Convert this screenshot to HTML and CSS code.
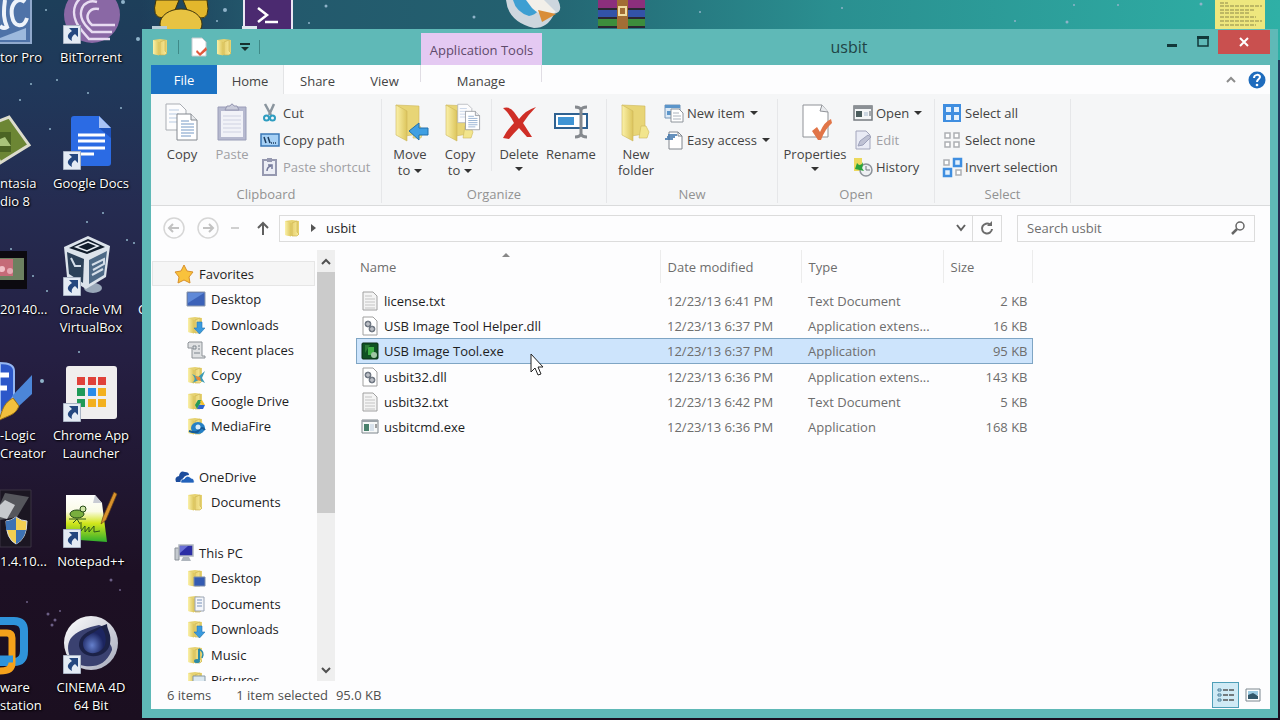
FILE: index.html
```html
<!DOCTYPE html>
<html lang="en">

<head>
    <meta charset="utf-8">
    <meta name="viewport" content="width=device-width, initial-scale=1.0">
    <title>usbit</title>

    <link rel="stylesheet" href="styles.css">

</head>

<body>
    <!-- shared icons -->
    <svg class="defs" aria-hidden="true">
        <defs>
            <linearGradient id="gold" x1="0" x2="1">
                <stop offset="0" stop-color="#fbf1a9"/>
                <stop offset="1" stop-color="#dcc55c"/>
            </linearGradient>
            <linearGradient id="gold2" x1="0" x2="1">
                <stop offset="0" stop-color="#e8d273"/>
                <stop offset="1" stop-color="#f7eb9b"/>
            </linearGradient>
            <linearGradient id="notegreen" x1="0" x2="0" y1="0" y2="1">
                <stop offset="0" stop-color="#fff"/>
                <stop offset=".35" stop-color="#fafbe6"/>
                <stop offset=".6" stop-color="#d3e61c"/>
                <stop offset="1" stop-color="#2fae2c"/>
            </linearGradient>
            <radialGradient id="lens" cx=".4" cy=".7">
                <stop offset="0" stop-color="#6580cc"/>
                <stop offset="1" stop-color="#1c2560"/>
            </radialGradient>
            <linearGradient id="silver" x1="0" x2="1" y1="0" y2="1">
                <stop offset="0" stop-color="#fff"/>
                <stop offset="1" stop-color="#a5a9bb"/>
            </linearGradient>
        </defs>
        <symbol id="folder" viewBox="0 0 18 18">
            <path d="M2 2l7-1 7 1v14l-7 1-7-1z" fill="#e6d271"/>
            <path d="M2 2l6 2v13.500l-6-1.500z" fill="url(#gold)"/>
            <path d="M9 4l5-2v11l2 2-2 2H9z" fill="url(#gold2)" stroke="#c9b04c" stroke-width=".6"/>
        </symbol>
        <symbol id="bigfolder" viewBox="0 0 36 40">
            <path d="M4 3l23 1v28l-14 2z" fill="#e8d576" stroke="#cdb75a" stroke-width=".6"/>
            <path d="M23 24h5l3 6-2 6h-8z" fill="#f2e58d" stroke="#cdb75a" stroke-width=".6"/>
            <path d="M4 3l11 6v30L4 33z" fill="url(#gold)" stroke="#cdb75a" stroke-width=".6"/>
        </symbol>
        <symbol id="shortcut" viewBox="0 0 18 19">
            <path d="M.5.500h17v18H.5z" fill="#e4ebf4" stroke="#aab4c4"/>
            <path d="M6 3h9v9l-3-3c-3 2-4 4-3 7-6-3-5-7 0-10z" fill="#24477f"/>
        </symbol>
        <symbol id="pages" viewBox="0 0 34 38">
            <path d="M1 1h14l6 6v20H1z" fill="#fcfcfd" stroke="#a9adb3"/>
            <path d="M4 7h10M4 11h10M4 15h8M4 19h8" stroke="#b9cbe2"/>
            <path d="M12 11h14l6 6v20H12z" fill="#fff" stroke="#83888f"/>
            <path d="M26 11v6h6" fill="#e7e9ec" stroke="#83888f"/>
            <path d="M16 18h8M16 21h13M16 24h13M16 27h13M16 30h13M16 33h10" stroke="#7599c5"/>
        </symbol>
        <symbol id="txt" viewBox="0 0 18 20">
            <path d="M2 1h10l4 4v14H2z" fill="#f4f4f4" stroke="#a0a0a0"/>
            <path d="M4 5h7M4 8h10M4 11h10M4 14h10M4 17h10" stroke="#c4c4c4"/>
        </symbol>
        <symbol id="dll" viewBox="0 0 18 20">
            <path d="M2 1h10l4 4v14H2z" fill="#fff" stroke="#a0a0a0"/>
            <circle cx="7" cy="8" r="2.500" fill="none" stroke="#68707c" stroke-width="1.500"/>
            <circle cx="11" cy="13" r="2.500" fill="none" stroke="#68707c" stroke-width="1.500"/>
            <path d="M7 4.500v7M3.500 8h7M11 9.500v7M7.500 13h7" stroke="#8a919b" stroke-width=".7"/>
        </symbol>
        <symbol id="arrowdown" viewBox="0 0 18 18">
            <path d="M10 5h5v6h3l-5.500 6L7 11h3z" fill="#3a9ade" stroke="#2577b5" stroke-width=".6"/>
        </symbol>
    </svg>

    <svg class="sky" aria-hidden="true">
        <g fill="#8fb3c9">
            <circle cx="123" cy="2" r="2"/>
            <circle cx="138" cy="39" r="2"/>
            <circle cx="46" cy="10" r="1"/>
            <circle cx="31" cy="84" r="1"/>
            <circle cx="57" cy="80" r="1"/>
            <circle cx="20" cy="100" r="1"/>
            <circle cx="121" cy="108" r="1"/>
            <circle cx="88" cy="93" r="1"/>
            <circle cx="50" cy="129" r="1"/>
            <circle cx="103" cy="213" r="1"/>
            <circle cx="87" cy="222" r="1"/>
            <circle cx="127" cy="240" r="1"/>
            <circle cx="134" cy="243" r="1"/>
            <circle cx="47" cy="291" r="1"/>
            <circle cx="11" cy="249" r="1"/>
            <circle cx="33" cy="276" r="1"/>
            <circle cx="42" cy="381" r="2"/>
            <circle cx="79" cy="352" r="1"/>
            <circle cx="225" cy="10" r="2"/>
            <circle cx="217" cy="21" r="1"/>
            <circle cx="326" cy="6" r="1.500"/>
            <circle cx="309" cy="23" r="1"/>
            <circle cx="474" cy="17" r="1.500"/>
            <circle cx="700" cy="12" r="1"/>
            <circle cx="842" cy="8" r="1"/>
            <circle cx="1015" cy="21" r="1"/>
            <circle cx="1074" cy="5" r="1"/>
            <circle cx="1067" cy="22" r="1.500"/>
            <circle cx="1118" cy="5" r="1"/>
            <circle cx="1201" cy="4" r="1.500"/>
        </g>
        <g fill="#6c5f86">
            <circle cx="48" cy="614" r="1.500"/>
            <circle cx="55" cy="620" r="1.500"/>
            <circle cx="60" cy="611" r="1"/>
            <circle cx="52" cy="625" r="1.500"/>
            <circle cx="111" cy="580" r="1.500"/>
            <circle cx="120" cy="590" r="1"/>
            <circle cx="27" cy="602" r="1"/>
        </g>
    </svg>

    <main class="desktop">
        <section class="icons icons-edge">
            <div class="shortcut">
                <svg viewBox="0 0 46 60">
                    <path d="M-10 2h41v53h-41z" fill="#4f73a8" stroke="#90a9cc" stroke-width="2"/>
                    <path d="M0 50l26-10v12H0z" fill="#9db9dd"/>
                    <path d="M25 14C18 8 10 16 12 28s12 12 15 2M5 12c-2 14-1 20 2 27-3 2-5 1-7-1" fill="none" stroke="#eef3fa" stroke-width="4"/>
                </svg>
                <span>tor Pro</span>
            </div>
            <div class="shortcut">
                <svg viewBox="0 0 46 60">
                    <path d="M-14 12L9 3l20 28L0 49z" fill="#6c8634" stroke="#dcdccc" stroke-width="3"/>
                    <path d="M0 18h11v20H0z" fill="#4b6423"/>
                    <path d="M0 25l5-2 6 9H0z" fill="#a9c47a"/>
                </svg>
                <span>ntasia<br>dio 8</span>
            </div>
            <div class="shortcut">
                <svg viewBox="0 0 46 60">
                    <path d="M0 11h27v38H0z" fill="#0c0a10"/>
                    <path d="M0 18h24v22H0z" fill="#6c8060"/>
                    <path d="M0 19h13v17H0z" fill="#c56b78"/>
                    <circle cx="2" cy="29" r="3" fill="#f1c1c8"/>
                    <circle cx="10" cy="31" r="3" fill="#e7aab4"/>
                </svg>
                <span>20140...</span>
            </div>
            <div class="shortcut">
                <svg viewBox="0 0 46 60">
                    <path d="M0-3q14 0 14 8v25L0 49z" fill="#2c57c9" stroke="#94b6f2" stroke-width="2"/>
                    <path d="M0 9h9M0 22h7" stroke="#fff" stroke-width="5"/>
                    <path d="M32 9v19L19 40l-7-10z" fill="#4c86d8"/>
                    <path d="M13 32l6 8C15 50 8 49-2 55c4-5 3-17 15-23z" fill="#f2c03d" stroke="#a07616"/>
                </svg>
                <span>-Logic<br>Creator</span>
            </div>
            <div class="shortcut">
                <svg viewBox="0 0 46 60">
                    <path d="M0-2h31v57H0z" fill="#1b1622" stroke="#3a3243"/>
                    <path d="M5 1l24 4-12 20L0 28V12z" fill="#55565c"/>
                    <path d="M0 13l5-5 10 5-8 14-7-2z" fill="#c7c9cd"/>
                    <path d="M16 25q-5 4-10 4 0 18 10 23 11-5 11-23-6 0-11-4z" fill="#f2cf52" stroke="#d6dbe4"/>
                    <path d="M16 25q-5 4-10 4v9h10zM16 38h10q-2 10-10 14z" fill="#3d72b4"/>
                </svg>
                <span>1.4.10...</span>
            </div>
            <div class="shortcut">
                <svg viewBox="0 0 46 60">
                    <path d="M0 3h14q10 0 10 10v20q0 11-10 11H0" fill="none" stroke="#2f93da" stroke-width="8"/>
                    <path d="M0 15h7q5 0 5 5v25q0 8-12 8" fill="none" stroke="#f5a11b" stroke-width="7"/>
                    <path d="M13 41H0" stroke="#2f93da" stroke-width="7"/>
                </svg>
                <span>ware<br>station</span>
            </div>
        </section>

        <section class="icons icons-main">
            <div class="shortcut">
                <svg viewBox="0 0 60 60">
                    <circle cx="31" cy="27" r="28" fill="#8a68a5"/>
                    <path d="M34 7C16 4 4 24 22 44l6 7h21M36 14C22 10 13 26 27 40l4 4h20M38 21c-10-2-16 8-7 16h23" fill="none" stroke="#e8dcf2" stroke-width="2.500"/>
                    <use href="#shortcut" x="2" y="37" width="18" height="19"/>
                </svg>
                <span>BitTorrent</span>
            </div>
            <div class="shortcut">
                <svg viewBox="0 0 60 60">
                    <path d="M13 2h25l12 12v35q0 3-3 3H13q-3 0-3-3V5q0-3 3-3z" fill="#2b6be4"/>
                    <path d="M38 2l12 12H38z" fill="#a9c3f5"/>
                    <path d="M38 14h12v10z" fill="#1e52bb"/>
                    <path d="M17 21h27M17 27h27M17 34h27M17 40h16" stroke="#fff" stroke-width="3"/>
                    <use href="#shortcut" x="2" y="37" width="18" height="19"/>
                </svg>
                <span>Google Docs</span>
            </div>
            <div class="shortcut">
                <svg viewBox="0 0 60 60">
                    <ellipse cx="32" cy="48" rx="9" ry="5" fill="#99a7b8"/>
                    <path d="M27-4l22 10-4 31-20 12L6 37 3 7z" fill="#dce3eb"/>
                    <path d="M27-1l17 8-18 7-18-6z" fill="#101c2b"/>
                    <path d="M27 2l10 4-11 5-11-4z" fill="none" stroke="#e7edf4" stroke-width="1.500"/>
                    <path d="M6 12l17 7-1 24-14-9z" fill="#2c4159"/>
                    <path d="M46 11L28 20v24l15-9z" fill="#4d6986"/>
                    <path d="M31 25l12-6v5l-11 6M31 35l11-6M10 18l4 8 6 0" fill="none" stroke="#d3dde8" stroke-width="2"/>
                    <use href="#shortcut" x="2" y="37" width="18" height="19"/>
                </svg>
                <span>Oracle VM<br>VirtualBox</span>
            </div>
            <div class="shortcut">
                <svg viewBox="0 0 60 60">
                    <rect x="5" y="0" width="51" height="53" rx="3" fill="#f0eeee"/>
                    <path d="M16 11h8v8h-8zM27 11h8v8h-8zM37 11h8v8h-8z" fill="#e0413a"/>
                    <path d="M16 22h8v8h-8zM16 33h8v8h-8z" fill="#1f9a58"/>
                    <path d="M27 22h8v8h-8z" fill="#2a8be8"/>
                    <path d="M37 22h8v8h-8zM27 33h8v8h-8zM37 33h8v8h-8z" fill="#f3b01f"/>
                    <use href="#shortcut" x="2" y="37" width="18" height="19"/>
                </svg>
                <span>Chrome App<br>Launcher</span>
            </div>
            <div class="shortcut">
                <svg viewBox="0 0 60 60">
                    <path d="M5 3h29l7 8 5 39-41-3z" fill="url(#notegreen)"/>
                    <path d="M34 3l-2 8h9z" fill="#c9ccd4"/>
                    <path d="M53 0l3 2-11 26-5 4 2-7z" fill="#d8922c" stroke="#6b4417" stroke-width=".7"/>
                    <ellipse cx="16" cy="22" rx="7" ry="4" fill="#79ae3e" stroke="#264b17"/>
                    <circle cx="22" cy="17" r="3" fill="#cfe5a5" stroke="#264b17"/>
                    <path d="M8 27h17M12 31l4-4 3 5M20 30v9l4-5v6l4-5v5l5-6v6l6-1" fill="none" stroke="#2c551a"/>
                    <use href="#shortcut" x="2" y="37" width="18" height="19"/>
                </svg>
                <span>Notepad++</span>
            </div>
            <div class="shortcut">
                <svg viewBox="0 0 60 60">
                    <circle cx="30" cy="25" r="27" fill="url(#silver)"/>
                    <path d="M8 36C4 20 14 12 38 7l8 3c-4 12 6 16 5 22-6 14-14 17-27 16C14 46 10 43 8 36z" fill="#3a4170"/>
                    <path d="M46 6c0 6 5 10 3 20-4 16-28 16-31 2C18 14 32 12 46 6z" fill="#1c2247"/>
                    <path d="M40 9c5 6 6 14 3 20-7 10-21 7-21-3C22 17 32 17 40 9z" fill="url(#lens)"/>
                    <use href="#shortcut" x="2" y="37" width="18" height="19"/>
                </svg>
                <span>CINEMA 4D<br>64 Bit</span>
            </div>
        </section>

        <svg class="peek peek-mascot" viewBox="0 0 60 30" aria-hidden="true">
            <path d="M4 0h23l-4 10-12 8q-12 0-7-18zM31 0h24q4 20-8 18L35 10z" fill="#e3b72c" stroke="#3e340c"/>
            <ellipse cx="29" cy="24" rx="21" ry="15" fill="#e8c342" stroke="#3e340c"/>
            <path d="M0 26h15v4H0z" fill="#b9cdd6"/>
        </svg>
        <svg class="peek peek-shell" viewBox="0 0 52 30" aria-hidden="true">
            <path d="M2-3h48v33H2z" fill="#4b2a70" stroke="#ece6f3" stroke-width="2"/>
            <path d="M16 8l9 7-9 7" fill="none" stroke="#fff" stroke-width="2.500"/>
            <path d="M23 22h13" stroke="#fff" stroke-width="2.500"/>
            <path d="M0 26h15v4H0z" fill="#dfe6ee"/>
        </svg>
        <svg class="peek peek-disc" viewBox="0 0 60 30" aria-hidden="true">
            <path d="M2 0h52q6 12-4 14-6 14-20 14Q4 22 2 0z" fill="#cdd6de"/>
            <path d="M9 0h28q0 14-12 16Q12 12 9 0z" fill="#3d9fd2"/>
            <path d="M22 0h18l12 12q-12 8-24-4z" fill="#f2efe9"/>
            <path d="M34 10l18 4-14 8z" fill="#d98d38"/>
        </svg>
        <svg class="peek peek-rar" viewBox="0 0 50 30" aria-hidden="true">
            <path d="M1 0h47v10H1z" fill="#8c2f7c"/>
            <path d="M1 10h47v9H1z" fill="#3353a8"/>
            <path d="M1 19h47v9H1z" fill="#3d8d3c"/>
            <path d="M1 9h47M1 18h47M1 27h47" stroke="#2b2731" stroke-width="2"/>
            <path d="M20 0h11v29H20z" fill="#a26d35"/>
            <path d="M22 7h7v8h-7z" fill="none" stroke="#f0dda1" stroke-width="2"/>
        </svg>
        <svg class="peek peek-note" viewBox="0 0 50 30" aria-hidden="true">
            <path d="M0 0h50v29H0z" fill="#eee77e"/>
            <path d="M5 3h8M5 6h42M5 10h34M5 13h30M5 17h36M5 21h42M5 25h36" stroke="#8d884a" stroke-dasharray="4 1"/>
        </svg>
        <span class="hidden-label">C</span>

        <article class="window">
            <header class="titlebar">
                <div class="quick">
                    <svg width="18" height="18"><use href="#folder"/></svg>
                    <i></i>
                    <button aria-label="Properties"><svg width="18" height="20" viewBox="0 0 18 20"><path d="M2 1h10l4 4v14H2z" fill="#fff" stroke="#c8ccd0"/><path d="M7 13l3 3 6-6 1 3-7 6-4-4z" fill="#e2593c"/></svg></button>
                    <button aria-label="New folder"><svg width="18" height="18"><use href="#folder"/></svg></button>
                    <button aria-label="Customize toolbar"><svg width="10" height="9" viewBox="0 0 10 9"><path d="M0 0h10v2H0zM1 4h8L5 8z" fill="#16302e"/></svg></button>
                    <i></i>
                </div>
                <div class="context">Application Tools</div>
                <h1>usbit</h1>
                <div class="controls">
                    <button aria-label="Minimize"><svg width="12" height="12" viewBox="0 0 12 12"><path d="M1 8h10v3H1z" fill="#12383a"/></svg></button>
                    <button aria-label="Maximize"><svg width="12" height="12" viewBox="0 0 12 12"><path d="M1 1h10v9H1z" fill="none" stroke="#12383a" stroke-width="1.500"/><path d="M0 0h12v3H0z" fill="#12383a"/></svg></button>
                    <button class="close" aria-label="Close"><svg width="10" height="10" viewBox="0 0 10 10"><path d="M1 1l8 8M9 1L1 9" stroke="#fff" stroke-width="2"/></svg></button>
                </div>
            </header>

            <nav class="tabs">
                <button class="file">File</button>
                <button class="active">Home</button>
                <button>Share</button>
                <button>View</button>
                <button class="manage">Manage</button>
                <div class="help">
                    <button aria-label="Minimize ribbon"><svg width="10" height="6" viewBox="0 0 10 6"><path d="M1 5l4-4 4 4" fill="none" stroke="#8c8c8c" stroke-width="2"/></svg></button>
                    <button aria-label="Help"><svg width="18" height="18" viewBox="0 0 18 18"><circle cx="9" cy="9" r="8.500" fill="#1f6cbd"/><path d="M6 7c0-4 6-4 6-1 0 2-3 2-3 5" fill="none" stroke="#fff" stroke-width="2"/><circle cx="9" cy="14" r="1.300" fill="#fff"/></svg></button>
                </div>
            </nav>

            <section class="ribbon">
                <div class="group clipboard">
                    <div class="tools">
                        <button class="big"><svg viewBox="0 0 36 40"><use href="#pages" x="1" y="1" width="34" height="38"/></svg>Copy</button>
                        <button class="big off"><svg viewBox="0 0 36 40"><path d="M4 5h28v33H4z" fill="#b6b9cf" stroke="#9a9db8"/><path d="M7 9h22v26H7z" fill="#f1f2f8"/><path d="M9 14h18M9 18h18M9 22h18M9 26h18M9 30h18" stroke="#cfd2e2"/><path d="M11 8l2-4h3q2-4 4 0h3l2 4z" fill="#c9cbda" stroke="#9496b0"/></svg>Paste</button>
                        <div class="stack">
                            <button><svg viewBox="0 0 20 20"><path d="M5 1l6 11M14 1L9 12" stroke="#8a959e" stroke-width="2.500"/><circle cx="6.500" cy="15" r="2.500" fill="none" stroke="#2e9dc0" stroke-width="2"/><circle cx="12.500" cy="15" r="2.500" fill="none" stroke="#2e9dc0" stroke-width="2"/></svg>Cut</button>
                            <button><svg viewBox="0 0 20 20"><path d="M1 4h18v12H1z" fill="#a5d0f5" stroke="#3b78b6" stroke-width="1.500"/><path d="M4 7l2 6M8 7l2 6M11 13h1M13 13h1M15 13h1" stroke="#1b3b5e" stroke-width="1.500"/></svg>Copy path</button>
                            <button class="off"><svg viewBox="0 0 20 20"><path d="M3 3h13v15H3z" fill="#eceef5" stroke="#9699b0" stroke-width="2"/><path d="M7 1h5v4H7z" fill="#9699b0"/><path d="M7 14q0-4 4-5M8 8h4v4" fill="none" stroke="#74799a" stroke-width="1.500"/></svg>Paste shortcut</button>
                        </div>
                    </div>
                    <h2>Clipboard</h2>
                </div>

                <div class="group organize">
                    <div class="tools">
                        <button class="big"><svg viewBox="0 0 36 40"><use href="#bigfolder" width="36" height="40"/><path d="M17 29l10-8v5h9v7h-9v5z" fill="#3f9fe2" stroke="#2371ad"/></svg>Move<br>to<b></b></button>
                        <button class="big"><svg viewBox="0 0 36 40"><use href="#bigfolder" width="36" height="40"/><use href="#pages" x="15" y="1" width="24" height="28"/></svg>Copy<br>to<b></b></button>
                        <i></i>
                        <button class="big"><svg viewBox="0 0 36 40"><path d="M2 6q7-2 11 4l5 7Q25 8 35 5q-8 8-13 16l9 14-5 0-8-9Q12 32 8 37l-6-1q4-8 11-15Q8 11 2 6z" fill="#cf2f27"/></svg>Delete<b class="below"></b></button>
                        <button class="big"><svg viewBox="0 0 36 40"><path d="M2 12h32v14H2z" fill="#fff" stroke="#2e6191" stroke-width="2"/><path d="M5 15h16v8H5z" fill="#3f94d4"/><path d="M22 5q5 0 6 3 1-3 6-3M22 35q5 0 6-3 1 3 6 3M28 7v26" fill="none" stroke="#85898e" stroke-width="3"/></svg>Rename</button>
                    </div>
                    <h2>Organize</h2>
                </div>

                <div class="group new">
                    <div class="tools">
                        <button class="big"><svg viewBox="0 0 36 40"><use href="#bigfolder" width="36" height="40"/></svg>New<br>folder</button>
                        <div class="stack">
                            <button><svg viewBox="0 0 20 20"><path d="M1 2h15v13H1z" fill="#dbe9f6" stroke="#7696b7"/><path d="M1 2h15v3H1z" fill="#5b95ca"/><path d="M3 8h4v4H3z" fill="#5b95ca"/><path d="M7 6h8l4 4v9H7z" fill="#fff" stroke="#8e949b"/><path d="M9 10h6M9 13h8M9 16h8" stroke="#adb4bd"/></svg>New item<b></b></button>
                            <button><svg viewBox="0 0 20 20"><path d="M5 2h9l4 4v13H5z" fill="#fff" stroke="#80868e"/><path d="M14 2v4h4" fill="none" stroke="#80868e"/><path d="M4 5h9M1 9h8M3 7h8" stroke="#346ea8" stroke-width="1.500"/></svg>Easy access<b></b></button>
                        </div>
                    </div>
                    <h2>New</h2>
                </div>

                <div class="group open">
                    <div class="tools">
                        <button class="big wide"><svg viewBox="0 0 36 40"><path d="M6 3h19l6 7v25H6z" fill="#fff" stroke="#8f9297"/><path d="M25 3l-2 6 8 1" fill="#e9ebee" stroke="#8f9297"/><path d="M15 29l5-4 3 5q4-10 11-13l1 4q-7 6-11 17h-3z" fill="#e17548"/></svg>Properties<b class="below"></b></button>
                        <div class="stack">
                            <button><svg viewBox="0 0 20 20"><path d="M1 3h18v14H1z" fill="#f4f6f7" stroke="#767b80" stroke-width="1.500"/><path d="M1 3h18v3H1z" fill="#8b9095"/><path d="M3 8h6v6H3z" fill="#4a5c5c"/><path d="M12 9v4M14 9v4" stroke="#a5b8cc"/><path d="M17 8v5" stroke="#53595f"/></svg>Open<b></b></button>
                            <button class="off"><svg viewBox="0 0 20 20"><path d="M3 1h10l4 4v14H3z" fill="#e9ebf5" stroke="#a3a6bc"/><path d="M5 16l2-5L15 5l3 2-8 8z" fill="#bfc2d4" stroke="#9ea2bb"/></svg>Edit</button>
                            <button><svg viewBox="0 0 20 20"><path d="M1 1h8v13H1z" fill="#ecd95d"/><circle cx="13" cy="13" r="6" fill="#eef0f3" stroke="#8c9299" stroke-width="1.500"/><path d="M13 9v4h4" fill="none" stroke="#70777f"/><path d="M10 5q0 5-1 6l2 3-9-2 2-6 2 2q3 0 4-3z" fill="#2ba33b"/></svg>History</button>
                        </div>
                    </div>
                    <h2>Open</h2>
                </div>

                <div class="group select">
                    <div class="tools">
                        <div class="stack">
                            <button><svg viewBox="0 0 20 20"><path d="M1 1h18v18H1z" fill="#3f8ee0"/><path d="M4 4h5v5H4zM12 4h5v5h-5zM4 12h5v5H4zM12 12h5v5h-5z" fill="#e4f1fd"/></svg>Select all</button>
                            <button><svg viewBox="0 0 20 20"><path d="M3 3h5v5H3zM12 3h5v5h-5zM3 12h5v5H3zM12 12h5v5h-5z" fill="#fff" stroke="#adb0b4" stroke-width="1.500"/></svg>Select none</button>
                            <button><svg viewBox="0 0 20 20"><path d="M2 3h5v5H2zM14 13h5v5h-5z" fill="#fff" stroke="#adb0b4" stroke-width="1.500"/><path d="M12 2h7v7h-7zM2 12h7v7H2z" fill="#e4f1fd" stroke="#3f8ee0" stroke-width="2.500"/></svg>Invert selection</button>
                        </div>
                    </div>
                    <h2>Select</h2>
                </div>
            </section>

            <section class="location">
                <button aria-label="Back"><svg width="22" height="22" viewBox="0 0 22 22"><circle cx="11" cy="11" r="10" fill="none" stroke="#d6d6d6" stroke-width="1.500"/><path d="M16 11H6M10 7l-4 4 4 4" fill="none" stroke="#c2c2c2" stroke-width="2"/></svg></button>
                <button aria-label="Forward"><svg width="22" height="22" viewBox="0 0 22 22"><circle cx="11" cy="11" r="10" fill="none" stroke="#d6d6d6" stroke-width="1.500"/><path d="M6 11h10M12 7l4 4-4 4" fill="none" stroke="#c2c2c2" stroke-width="2"/></svg></button>
                <button aria-label="Recent locations"><svg width="8" height="4" viewBox="0 0 8 4"><path d="M0 2h8" stroke="#d0d0d0" stroke-width="2"/></svg></button>
                <button aria-label="Up"><svg width="12" height="16" viewBox="0 0 12 16"><path d="M6 15V3M1 8l5-5 5 5" fill="none" stroke="#5f5f5f" stroke-width="2"/></svg></button>
                <div class="address">
                    <svg width="18" height="18"><use href="#folder"/></svg>
                    <svg width="5" height="8" viewBox="0 0 5 8"><path d="M0 0l5 4-5 4z" fill="#555"/></svg>
                    <span>usbit</span>
                    <button aria-label="Previous locations"><svg width="10" height="8" viewBox="0 0 10 8"><path d="M1 1l4 5 4-5" fill="none" stroke="#606060" stroke-width="2"/></svg></button>
                    <button class="refresh" aria-label="Refresh"><svg width="14" height="14" viewBox="0 0 14 14"><path d="M10 3.500A5 5 0 1 0 12 8" fill="none" stroke="#6c6c6c" stroke-width="2"/><path d="M7 5h5V0z" fill="#6c6c6c"/></svg></button>
                </div>
                <label class="search">
                    <input type="text" placeholder="Search usbit" aria-label="Search usbit">
                    <svg width="14" height="14" viewBox="0 0 14 14"><circle cx="9" cy="5" r="4" fill="none" stroke="#666" stroke-width="1.500"/><path d="M6 8l-5 5" stroke="#666" stroke-width="2.500"/></svg>
                </label>
            </section>

            <section class="content">
                <nav class="places">
                    <ul class="fav">
                        <li class="top current"><svg viewBox="0 0 20 20"><path d="M10 1l3 6 6 1-4 5 1 6-6-3-6 3 1-6-4-5 6-1z" fill="#f9c23c" stroke="#d8902b"/></svg><a href="#">Favorites</a></li>
                        <li><svg viewBox="0 0 20 20"><path d="M1 3h18v14H1z" fill="#3c62b8" stroke="#8d99ac"/><path d="M2 4h16L2 14z" fill="#5f89d8"/></svg><a href="#">Desktop</a></li>
                        <li><svg viewBox="0 0 20 20"><use href="#folder" width="18" height="20"/><use href="#arrowdown" x="1" y="2" width="18" height="18"/></svg><a href="#">Downloads</a></li>
                        <li><svg viewBox="0 0 20 20"><path d="M3 2h13v14h3v2H6V8H2V3z" fill="#dfe1e3" stroke="#8d9297"/><path d="M7 6h3v3H7zM12 6h2M12 9h2M8 13h6" fill="none" stroke="#7d858d"/></svg><a href="#">Recent places</a></li>
                        <li><svg viewBox="0 0 20 20"><use href="#folder" width="18" height="20"/><path d="M6 18c4-3 3-6 0-9l6 3 7-6-3 7 3 5-6-3z" fill="#3c9bb5"/><path d="M9 11l5 1 1 4-4-1z" fill="#e58a3b"/></svg><a href="#">Copy</a></li>
                        <li><svg viewBox="0 0 20 20"><use href="#folder" width="18" height="20"/><path d="M12 9h4l-5 9-2-4z" fill="#249a56"/><path d="M11 18l2-4h6l-2 4z" fill="#2b65d0"/><path d="M16 9l3 5h-3l-2-4z" fill="#f3c12c"/></svg><a href="#">Google Drive</a></li>
                        <li><svg viewBox="0 0 20 20"><use href="#folder" width="18" height="20"/><ellipse cx="12" cy="12" rx="7" ry="6" fill="#2580c5"/><path d="M3 15q8 3 10-1 3-4 6 0" fill="none" stroke="#155a96" stroke-width="2"/><circle cx="12" cy="11" r="2.500" fill="#d9ecfa"/></svg><a href="#">MediaFire</a></li>
                    </ul>
                    <ul class="drive">
                        <li class="top"><svg viewBox="0 0 20 20"><path d="M2 15q-2-5 3-6 1-6 6-4 4 0 4 3-6 0-7 7z" fill="#1c4c9c"/><path d="M7 16q-1-4 3-4 3-5 7-1 4 1 3 5z" fill="#2262bb" stroke="#fff" stroke-width=".7"/></svg><a href="#">OneDrive</a></li>
                        <li><svg viewBox="0 0 20 20"><use href="#folder" width="18" height="20"/></svg><a href="#">Documents</a></li>
                    </ul>
                    <ul class="pc">
                        <li class="top"><svg viewBox="0 0 20 20"><path d="M1 5h4v12H1z" fill="#c4c9cf" stroke="#8b9198"/><path d="M5 2h14v11H5z" fill="#2c2ea5" stroke="#b0b6be" stroke-width="1.500"/><path d="M6 3h8l-8 7z" fill="#6a70d6"/><path d="M9 14h6l2 4H7z" fill="#aeb5bd"/></svg><a href="#">This PC</a></li>
                        <li><svg viewBox="0 0 20 20"><use href="#folder" width="18" height="20"/><path d="M8 9h11v9H8z" fill="#345bb2" stroke="#7c8daa"/></svg><a href="#">Desktop</a></li>
                        <li><svg viewBox="0 0 20 20"><use href="#folder" width="18" height="20"/><path d="M9 3h9v14H9z" fill="#f4f6fa" stroke="#9aa4b4"/><path d="M11 6h5M11 9h5M11 12h5" stroke="#7892ba"/></svg><a href="#">Documents</a></li>
                        <li><svg viewBox="0 0 20 20"><use href="#folder" width="18" height="20"/><use href="#arrowdown" x="1" y="2" width="18" height="18"/></svg><a href="#">Downloads</a></li>
                        <li><svg viewBox="0 0 20 20"><use href="#folder" width="18" height="20"/><path d="M13 4q6 3 3 9" fill="none" stroke="#2d8ba5" stroke-width="1.500"/><path d="M13 4v11" stroke="#2d8ba5" stroke-width="2"/><ellipse cx="11" cy="16" rx="3" ry="2" fill="#2d8ba5"/></svg><a href="#">Music</a></li>
                        <li><svg viewBox="0 0 20 20"><use href="#folder" width="18" height="20"/><path d="M7 6h12v9H7z" fill="#dbe8f0" stroke="#8798a4"/></svg><a href="#">Pictures</a></li>
                    </ul>
                </nav>
                <div class="scroll">
                    <button aria-label="Scroll up"><svg width="10" height="7" viewBox="0 0 10 7"><path d="M1 6l4-4 4 4" fill="none" stroke="#505050" stroke-width="2"/></svg></button>
                    <div class="thumb"></div>
                    <button aria-label="Scroll down"><svg width="10" height="7" viewBox="0 0 10 7"><path d="M1 1l4 4 4-4" fill="none" stroke="#505050" stroke-width="2"/></svg></button>
                </div>

                <div class="list">
                    <table>
                        <thead>
                            <tr>
                                <th class="name">Name<svg class="sort" width="8" height="4" viewBox="0 0 8 4"><path d="M0 4l4-4 4 4z" fill="#888"/></svg></th>
                                <th class="date">Date modified</th>
                                <th class="type">Type</th>
                                <th class="size">Size</th>
                            </tr>
                        </thead>
                        <tbody>
                            <tr>
                                <td><svg><use href="#txt"/></svg>license.txt</td>
                                <td>12/23/13 6:41 PM</td>
                                <td>Text Document</td>
                                <td>2 KB</td>
                            </tr>
                            <tr>
                                <td><svg><use href="#dll"/></svg>USB Image Tool Helper.dll</td>
                                <td>12/23/13 6:37 PM</td>
                                <td>Application extens...</td>
                                <td>16 KB</td>
                            </tr>
                            <tr class="selected">
                                <td><svg viewBox="0 0 18 20"><rect x="1" y="2" width="16" height="16" rx="1" fill="#0f5222" stroke="#0a2c14"/><path d="M7 6h6v8H7z" fill="#3fae45"/><path d="M4 4h5l-5 8z" fill="#2b7a36"/><circle cx="13" cy="14" r="3" fill="#9fc7a4"/></svg>USB Image Tool.exe</td>
                                <td>12/23/13 6:37 PM</td>
                                <td>Application</td>
                                <td>95 KB</td>
                            </tr>
                            <tr>
                                <td><svg><use href="#dll"/></svg>usbit32.dll</td>
                                <td>12/23/13 6:36 PM</td>
                                <td>Application extens...</td>
                                <td>143 KB</td>
                            </tr>
                            <tr>
                                <td><svg><use href="#txt"/></svg>usbit32.txt</td>
                                <td>12/23/13 6:42 PM</td>
                                <td>Text Document</td>
                                <td>5 KB</td>
                            </tr>
                            <tr>
                                <td><svg viewBox="0 0 18 20"><path d="M1 3h16v13H1z" fill="#f6f8f8" stroke="#7f868c"/><path d="M1 3h16v2H1z" fill="#9da4aa"/><path d="M3 7h5v7H3z" fill="#48806b"/><path d="M9 7h4v7H9z" fill="#d8e2ec"/><path d="M15 7v4" stroke="#444"/></svg>usbitcmd.exe</td>
                                <td>12/23/13 6:36 PM</td>
                                <td>Application</td>
                                <td>168 KB</td>
                            </tr>
                        </tbody>
                    </table>
                </div>
            </section>

            <footer class="status">
                <span>6 items</span>
                <span>1 item selected</span>
                <span>95.0 KB</span>
                <div class="views">
                    <button class="on" aria-label="Details"><svg width="18" height="16" viewBox="0 0 18 16"><path d="M1 2h3v2H1zM1 7h3v2H1zM1 12h3v2H1z" fill="none" stroke="#4a7f9a"/><path d="M6 3h5M12 3h5M6 8h5M12 8h5M6 13h5M12 13h5" stroke="#555" stroke-width="1.500"/></svg></button>
                    <button aria-label="Large icons"><svg width="16" height="14" viewBox="0 0 16 14"><path d="M1 1h14v12H1z" fill="#fff" stroke="#7d8890"/><path d="M3 3h10v4H3z" fill="#9ccbe2"/><path d="M3 7l5-2 5 3v3H3z" fill="#33586b"/></svg></button>
                </div>
            </footer>
        </article>

        <svg class="pointer" width="14" height="24" viewBox="0 0 14 24" aria-hidden="true">
            <path d="M1 1v18l4-4 3 7 3-1-3-7h5z" fill="#fff" stroke="#222"/>
        </svg>
    </main>
</body></html>
```

FILE: styles.css
```css
* {
    box-sizing: border-box;
}

body {
    margin: 0;
    font-family: "Open Sans", "Noto Sans", sans-serif;
    font-size: 13px;
    line-height: 18px;
    color: #1e1e1e;
    background-image: linear-gradient(90deg, transparent 11%, #23586c 20%, #23606f 40%, #2a8f90 65%, #2fb0a6 100%), linear-gradient(180deg, #1d3f5a 0, #20385a 12%, #252c51 28%, #251f42 50%, #1d1024 80%, #1b0f20 100%);
    background-size: 100% 60px, 100% 100vh;
    background-repeat: no-repeat;
    background-color: #16202e;
}

button {
    border: none;
    background: none;
    padding: 0;
    margin: 0;
    font: inherit;
    color: inherit;
}

svg {
    flex: none;
    overflow: visible;
}

h1,
h2 {
    margin: 0;
    font-weight: normal;
}

.defs {
    position: absolute;
    width: 0;
    height: 0;
}

.desktop {
    position: relative;
    height: 100vh;
    overflow: hidden;
}

.sky {
    position: absolute;
    width: 100%;
    height: 100%;
    overflow: hidden;
}


/* desktop shortcuts */

.icons {
    position: absolute;
    top: -12px;
    color: white;
    text-shadow: 1px 1px 2px black, 0 0 2px black;
}

.icons-edge {
    left: 0;
}

.icons-main {
    left: 41px;
    width: 100px;
    text-align: center;
}

.shortcut {
    height: 126px;
}

.shortcut svg {
    display: block;
    height: 60px;
}

.icons-edge svg {
    width: 46px;
}

.icons-main svg {
    width: 60px;
    margin: 0 auto;
}

.shortcut span {
    white-space: nowrap;
}

.peek {
    position: absolute;
    top: 0;
    height: 30px;
    overflow: hidden;
}

.peek-mascot {
    left: 152px;
    width: 60px;
}

.peek-shell {
    left: 242px;
    width: 52px;
}

.peek-disc {
    left: 504px;
    width: 60px;
}

.peek-rar {
    left: 597px;
    width: 50px;
}

.peek-note {
    left: 1215px;
    width: 50px;
}

.hidden-label {
    position: absolute;
    left: 138px;
    top: 300px;
    color: white;
}

.pointer {
    position: absolute;
    left: 530px;
    top: 353px;
}


/* window frame */

.window {
    position: absolute;
    top: 29px;
    right: 2px;
    bottom: 2px;
    left: 142px;
    display: flex;
    flex-direction: column;
    padding: 0 8px 9px 9px;
    background-color: #5fb9b7;
}

.titlebar {
    display: flex;
    height: 36px;
    flex: none;
}

.quick {
    width: 270px;
    display: flex;
    align-items: center;
    gap: 7px;
}

.quick button {
    display: flex;
}

.quick i {
    width: 1px;
    height: 14px;
    margin: 0 4px 0 2px;
    background-color: #3f8a88;
}

.context {
    width: 121px;
    margin-top: 4px;
    line-height: 34px;
    text-align: center;
    color: #5e4a6b;
    background-color: #e4c9f2;
}

h1 {
    flex: 1;
    text-align: center;
    font-size: 16px;
    line-height: 36px;
    color: #1f4445;
}

.controls {
    display: flex;
    height: 24px;
    margin-top: 1px;
}

.controls button {
    width: 31px;
    display: flex;
    align-items: center;
    justify-content: center;
}

.controls .close {
    width: 52px;
    background-color: #c9504f;
}


/* tabs */

.tabs {
    display: flex;
    flex: none;
    height: 29px;
    background-color: #fdfdfe;
    color: #444;
}

.tabs > button {
    width: 67px;
    line-height: 32px;
}

.tabs .file {
    width: 66px;
    background-color: #1b72c4;
    color: white;
    line-height: 30px;
}

.tabs .active {
    background-color: #f5f6f7;
    border-right: 1px solid #e3e4e6;
}

.tabs .manage {
    width: 122px;
    margin-left: 2px;
    height: 17px;
    border: 1px solid #e0dde4;
    border-width: 0 1px;
}

.help {
    flex: 1;
    display: flex;
    align-items: center;
    justify-content: flex-end;
    gap: 12px;
    padding-right: 4px;
}

.help button {
    display: flex;
}


/* ribbon */

.ribbon {
    display: flex;
    flex: none;
    height: 112px;
    background-color: #f5f6f7;
    border-bottom: 1px solid #dadbdc;
    color: #444;
}

.group {
    display: flex;
    flex-direction: column;
    margin: 5px 0 2px;
    border-right: 1px solid #e6e7e9;
}

.clipboard {
    width: 231px;
}

.organize {
    width: 225px;
}

.new {
    width: 171px;
}

.open {
    width: 157px;
}

.select {
    width: 136px;
}

.tools {
    display: flex;
    flex: 1;
    padding-left: 4px;
}

.clipboard .tools {
    padding-left: 6px;
}

.organize .tools {
    padding-left: 3px;
}

.select .tools {
    padding-left: 7px;
}

.tools i {
    width: 1px;
    height: 72px;
    margin: 0 2px 0 6px;
    background-color: #e6e7e9;
}

h2 {
    font-size: 13px;
    line-height: 18px;
    text-align: center;
    color: #929292;
}

.big {
    width: 50px;
    padding-top: 3px;
    display: block;
    align-self: flex-start;
    line-height: 16px;
    text-align: center;
    white-space: nowrap;
}

.organize .big:last-child {
    width: 54px;
}

.big svg {
    display: block;
    width: 36px;
    height: 40px;
    margin: 0 auto 4px;
}

.big.wide {
    width: 66px;
}

.off {
    color: #a0a0a4;
}

.group b {
    display: inline-block;
    margin-left: 4px;
    vertical-align: 2px;
    border: 4px solid transparent;
    border-top-color: #333;
    border-bottom: none;
}

.group .below {
    display: block;
    width: 8px;
    margin: 5px auto 0;
}

.stack {
    padding-left: 3px;
}

.open .stack {
    padding-left: 5px;
}

.select .stack {
    padding: 0;
}

.stack button {
    display: flex;
    align-items: center;
    height: 27px;
    gap: 3px;
    white-space: nowrap;
}

.stack svg {
    width: 20px;
    height: 20px;
}

.stack b {
    margin-left: 2px;
}


/* address bar */

.location {
    display: flex;
    flex: none;
    align-items: center;
    height: 44px;
    padding: 0 15px 0 12px;
    background-color: #fdfdfe;
}

.location > button {
    display: flex;
    margin-right: 12px;
}

.location > button:nth-of-type(3) {
    margin-right: 18px;
}

.location > button:nth-of-type(4) {
    margin-right: 10px;
}

.address {
    flex: 1;
    display: flex;
    align-items: center;
    gap: 10px;
    height: 27px;
    padding-left: 3px;
    border: 1px solid #dcdcdc;
}

.address span {
    flex: 1;
}

.address button {
    display: flex;
    align-items: center;
    justify-content: center;
    align-self: stretch;
}

.address .refresh {
    width: 29px;
    margin-left: -4px;
    border-left: 1px solid #dcdcdc;
}

.search {
    width: 238px;
    display: flex;
    align-items: center;
    height: 27px;
    margin-left: 15px;
    padding: 0 9px;
    border: 1px solid #dcdcdc;
}

.search input {
    flex: 1;
    min-width: 0;
    padding: 0;
    border: none;
    outline: none;
    font: inherit;
    background: none;
}

.search input::placeholder {
    color: #6f6f6f;
}


/* folder tree */

.content {
    display: flex;
    flex: 1;
    min-height: 0;
    background-color: #fdfdfe;
}

.places {
    width: 166px;
    padding-top: 11px;
    overflow: hidden;
}

.places ul {
    display: grid;
    grid-auto-rows: 1fr;
    list-style: none;
    margin: 0 0 25px;
    padding: 0;
}

.fav {
    height: 178px;
}

.drive {
    height: 51px;
}

.pc {
    height: 153px;
}

.places li {
    display: flex;
    align-items: center;
    gap: 5px;
    padding-left: 35px;
}

.places .top {
    padding-left: 23px;
}

.places .current {
    margin: 0 2px 0 1px;
    padding-left: 21px;
    background-color: #f6f6f6;
    border: 1px solid #e6e6e6;
}

.places svg {
    width: 20px;
    height: 20px;
}

.places a {
    color: inherit;
    text-decoration: none;
    white-space: nowrap;
}

.scroll {
    width: 18px;
    display: flex;
    flex-direction: column;
    background-color: #efefef;
}

.scroll button {
    display: flex;
    align-items: center;
    justify-content: center;
    height: 22px;
    flex: none;
}

.thumb {
    height: 56%;
    margin-bottom: auto;
    background-color: #cbcbcb;
}


/* file list */

.list {
    flex: 1;
    padding: 0 0 0 21px;
    overflow: hidden;
}

table {
    width: 677px;
    table-layout: fixed;
    border-collapse: collapse;
}

th {
    position: relative;
    height: 33px;
    padding: 0 0 0 7px;
    font-weight: normal;
    text-align: left;
    color: #6d6d6d;
    border-right: 1px solid #ececec;
}

.name {
    width: 304px;
    padding-left: 4px;
}

.date {
    width: 141px;
}

.type {
    width: 142px;
}

.sort {
    position: absolute;
    left: 50%;
    top: 3px;
    margin-left: -6px;
}

tbody::before {
    content: "";
    display: block;
    height: 5px;
}

td {
    height: 25px;
    padding: 0 0 0 7px;
    white-space: nowrap;
    color: #6d6d6d;
}

td:first-child {
    display: flex;
    align-items: center;
    gap: 5px;
    padding-left: 5px;
    color: #1e1e1e;
}

td:last-child {
    padding: 0 5px 0 0;
    text-align: right;
}

td svg {
    width: 18px;
    height: 20px;
}

.selected {
    background-color: #cde4fc;
    outline: 1px solid #7fa5c4;
    outline-offset: -1px;
}

.selected td {
    height: 26px;
}


/* status bar */

.status {
    display: flex;
    flex: none;
    align-items: center;
    height: 28px;
    padding: 0 4px 0 16px;
    color: #505050;
    background-color: #fdfdfe;
}

.status span {
    margin-right: 8px;
}

.status span:first-child {
    margin-right: 25px;
}

.views {
    display: flex;
    margin-left: auto;
}

.views button {
    display: flex;
    align-items: center;
    justify-content: center;
    width: 27px;
    height: 26px;
}

.views .on {
    background-color: #cfeaf5;
    border: 1px solid #4f9fb8;
}
```
